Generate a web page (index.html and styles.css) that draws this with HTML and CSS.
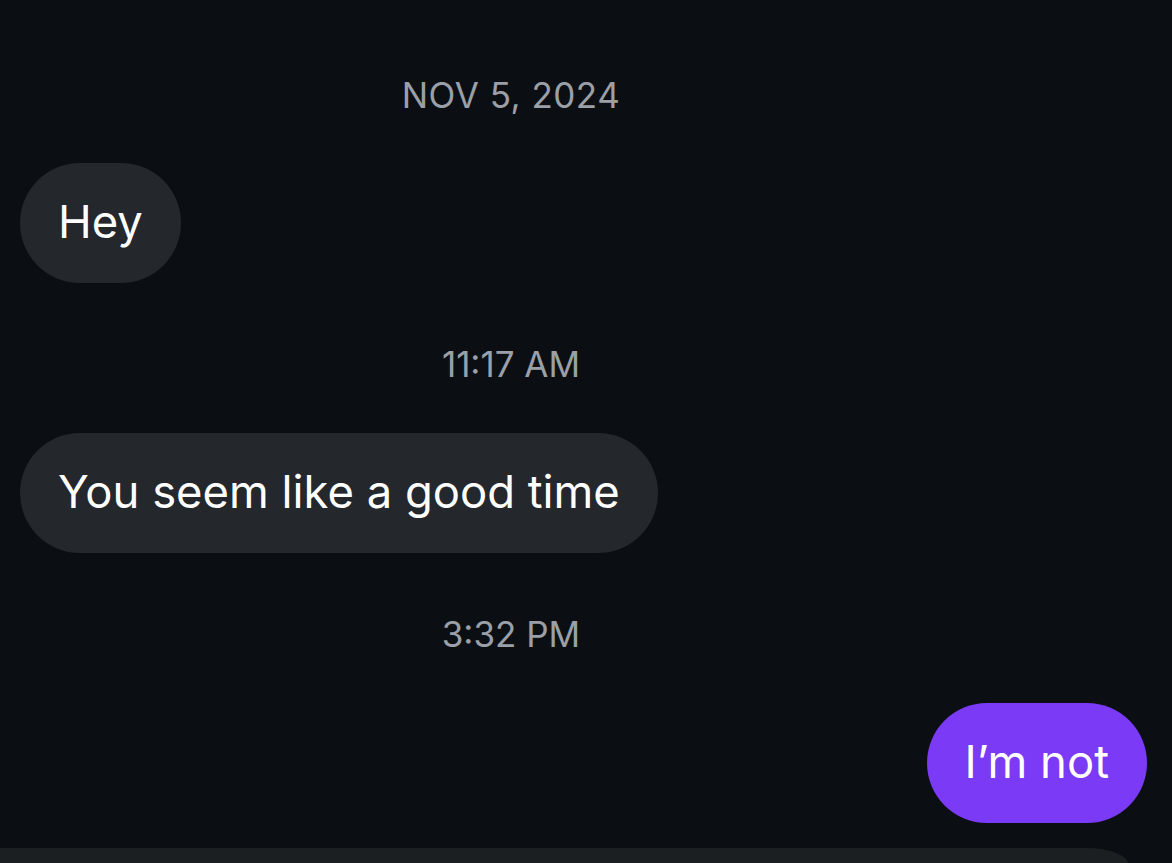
FILE: index.html
```html
<!DOCTYPE html>
<html>
<head>
<meta charset="utf-8">
<link rel="stylesheet" href="styles.css">
</head>
<body>
<div class="chat">
  <div class="stamp stamp-date">NOV 5, 2024</div>
  <div class="row in"><div class="bubble gray">Hey</div></div>
  <div class="stamp">11:17 AM</div>
  <div class="row in"><div class="bubble gray">You seem like a good time</div></div>
  <div class="stamp">3:32 PM</div>
  <div class="row out"><div class="bubble purple">I’m not</div></div>
  <div class="composer"></div>
</div>
</body>
</html>
```
FILE: styles.css
```css
html, body {
  margin: 0;
  padding: 0;
  background: #0b0f13;
  height: 100%;
  overflow: hidden;
}
.chat {
  font-family: Inter, "Noto Sans", sans-serif;
  display: flex;
  flex-direction: column;
  padding-top: 75px;
}
.stamp {
  width: 1022px;
  text-align: center;
  color: #9ba0a8;
  font-size: 35px;
  line-height: 40px;
  margin-top: 61px;
  margin-bottom: 49px;
}
.stamp-date {
  margin-top: 0;
  margin-bottom: 48px;
  letter-spacing: 0.5px;
}
.row {
  display: flex;
  padding: 0 25px 0 20px;
}
.row.out {
  justify-content: flex-end;
}
.bubble {
  font-size: 45.4px;
  line-height: 56px;
  padding: 31px 38px 33px;
  border-radius: 60px;
  color: #ffffff;
}
.gray {
  background: #24272c;
}
.purple {
  background: #7a3af6;
}
.composer {
  margin-top: 25px;
  height: 16px;
  margin-left: -40px;
  margin-right: 44px;
  background: #1c1f22;
  border-top-right-radius: 42px 16px;
}
```
